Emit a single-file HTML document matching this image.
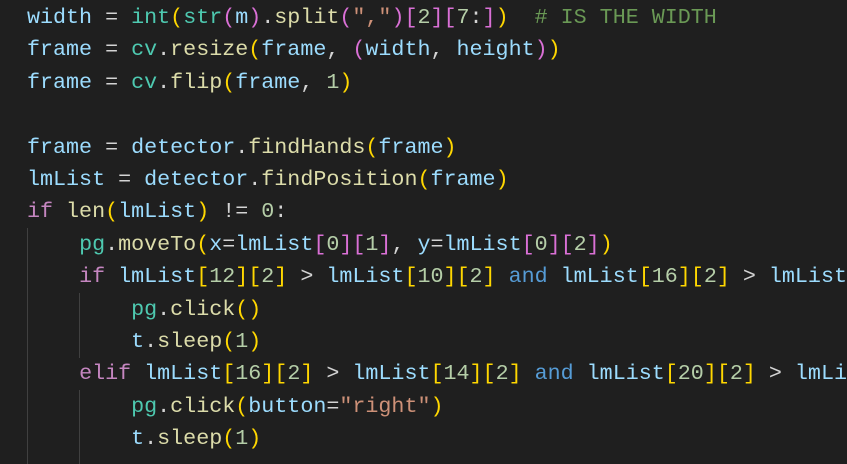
<!DOCTYPE html>
<html><head><style>
html,body{margin:0;padding:0;background:#1f1f1f;width:847px;height:464px;overflow:hidden}
#w{position:absolute;left:0;top:0;width:847px;height:464px;overflow:hidden}
pre{margin:0;position:absolute;left:27px;top:2px;width:820px;overflow:hidden;font-family:"Liberation Mono",monospace;font-size:21.7px;line-height:32.4px;color:#d4d4d4;white-space:pre}
.v{color:#9cdcfe}.f{color:#dcdcaa}.c{color:#4ec9b0}.n{color:#b5cea8}.k{color:#c586c0}.b{color:#569cd6}
.s{color:#ce9178}.m{color:#6a9955}.y{color:#ffd700}.p{color:#da70d6}
.g{position:absolute;width:1px;background:#404040}
</style></head><body><div id="w">
<div class="g" style="left:27px;top:228px;height:236px"></div>
<div class="g" style="left:79px;top:293px;height:65px"></div>
<div class="g" style="left:79px;top:390px;height:74px"></div>
<pre><span class="v">width</span> = <span class="c">int</span><span class="y">(</span><span class="c">str</span><span class="p">(</span><span class="v">m</span><span class="p">)</span>.<span class="f">split</span><span class="p">(</span><span class="s">","</span><span class="p">)[</span><span class="n">2</span><span class="p">][</span><span class="n">7</span>:<span class="p">]</span><span class="y">)</span>  <span class="m"># IS THE WIDTH</span>
<span class="v">frame</span> = <span class="c">cv</span>.<span class="f">resize</span><span class="y">(</span><span class="v">frame</span>, <span class="p">(</span><span class="v">width</span>, <span class="v">height</span><span class="p">)</span><span class="y">)</span>
<span class="v">frame</span> = <span class="c">cv</span>.<span class="f">flip</span><span class="y">(</span><span class="v">frame</span>, <span class="n">1</span><span class="y">)</span>

<span class="v">frame</span> = <span class="v">detector</span>.<span class="f">findHands</span><span class="y">(</span><span class="v">frame</span><span class="y">)</span>
<span class="v">lmList</span> = <span class="v">detector</span>.<span class="f">findPosition</span><span class="y">(</span><span class="v">frame</span><span class="y">)</span>
<span class="k">if</span> <span class="f">len</span><span class="y">(</span><span class="v">lmList</span><span class="y">)</span> != <span class="n">0</span>:
    <span class="c">pg</span>.<span class="f">moveTo</span><span class="y">(</span><span class="v">x</span>=<span class="v">lmList</span><span class="p">[</span><span class="n">0</span><span class="p">][</span><span class="n">1</span><span class="p">]</span>, <span class="v">y</span>=<span class="v">lmList</span><span class="p">[</span><span class="n">0</span><span class="p">][</span><span class="n">2</span><span class="p">]</span><span class="y">)</span>
    <span class="k">if</span> <span class="v">lmList</span><span class="y">[</span><span class="n">12</span><span class="y">][</span><span class="n">2</span><span class="y">]</span> &gt; <span class="v">lmList</span><span class="y">[</span><span class="n">10</span><span class="y">][</span><span class="n">2</span><span class="y">]</span> <span class="b">and</span> <span class="v">lmList</span><span class="y">[</span><span class="n">16</span><span class="y">][</span><span class="n">2</span><span class="y">]</span> &gt; <span class="v">lmList</span>
        <span class="c">pg</span>.<span class="f">click</span><span class="y">()</span>
        <span class="v">t</span>.<span class="f">sleep</span><span class="y">(</span><span class="n">1</span><span class="y">)</span>
    <span class="k">elif</span> <span class="v">lmList</span><span class="y">[</span><span class="n">16</span><span class="y">][</span><span class="n">2</span><span class="y">]</span> &gt; <span class="v">lmList</span><span class="y">[</span><span class="n">14</span><span class="y">][</span><span class="n">2</span><span class="y">]</span> <span class="b">and</span> <span class="v">lmList</span><span class="y">[</span><span class="n">20</span><span class="y">][</span><span class="n">2</span><span class="y">]</span> &gt; <span class="v">lmLi</span>
        <span class="c">pg</span>.<span class="f">click</span><span class="y">(</span><span class="v">button</span>=<span class="s">"right"</span><span class="y">)</span>
        <span class="v">t</span>.<span class="f">sleep</span><span class="y">(</span><span class="n">1</span><span class="y">)</span></pre>
</div></body></html>
